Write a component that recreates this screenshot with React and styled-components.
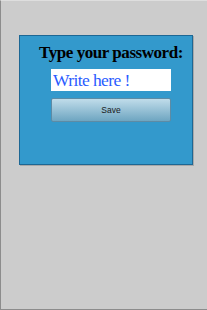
import React from "react"
import styled, { createGlobalStyle } from "styled-components"

const Global = createGlobalStyle`
  html, body {
    margin: 0;
    padding: 0;
    background: #cccccc;
  }
`

const Page = styled.div`
  box-sizing: border-box;
  width: 207px;
  height: 310px;
  background: #cccccc;
  border-top: 1px solid #dedede;
  border-left: 1px solid #8c8c8c;
  border-bottom: 1px solid #8c8c8c;
  padding: 34px 0 0 18px;
`

const Panel = styled.div`
  box-sizing: border-box;
  width: 174px;
  height: 130px;
  background: #3399cc;
  border: 1px solid #1d6794;
  box-shadow: 1px 1px 0 #a8a8a8;
  display: flex;
  flex-direction: column;
  align-items: center;
  padding: 7px 0 0 10px;
`

const Title = styled.h1`
  margin: 0;
  font-family: "Liberation Serif", serif;
  font-weight: bold;
  font-size: 17px;
  line-height: 20px;
  letter-spacing: -0.45px;
  color: #000;
  white-space: nowrap;
`

const Input = styled.input`
  box-sizing: border-box;
  width: 120px;
  height: 22px;
  margin-top: 6px;
  border: none;
  outline: none;
  padding: 0 2px;
  background: #fff;
  font-family: "Liberation Serif", serif;
  font-size: 17.5px;
  letter-spacing: -0.6px;
  color: #2a5cff;
  &::placeholder {
    color: #2a5cff;
    opacity: 1;
  }
`

const Button = styled.button`
  box-sizing: border-box;
  width: 120px;
  height: 24px;
  margin-top: 7px;
  border: 1px solid #5d8ba5;
  border-radius: 2px;
  background: linear-gradient(#c0dcea, #6ea5c1);
  font-family: "Liberation Sans", sans-serif;
  font-size: 8.5px;
  color: #1a1a1a;
  cursor: pointer;
`

export default function App() {
  return (
    <Page>
      <Global />
      <Panel>
        <Title>Type your password:</Title>
        <Input placeholder="Write here !" />
        <Button>Save</Button>
      </Panel>
    </Page>
  )
}
